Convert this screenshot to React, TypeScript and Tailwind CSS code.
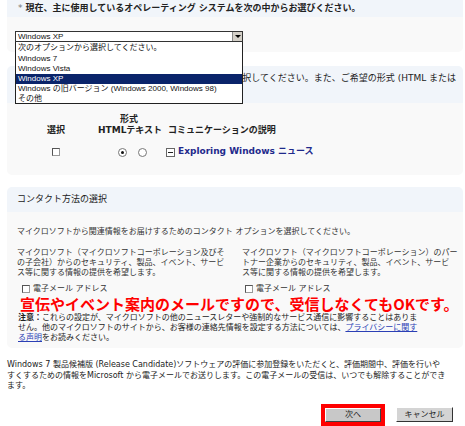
import React from "react";

const options = [
  { label: "次のオプションから選択してください。", h: "h-[12px]" },
  { label: "Windows 7", h: "h-[10px]" },
  { label: "Windows Vista", h: "h-[10px]" },
  { label: "Windows XP", h: "h-[10px]", active: true },
  { label: "Windows の旧バージョン (Windows 2000, Windows 98)", h: "h-[10px]" },
  { label: "その他", h: "h-[9px]" },
];

function Checkbox() {
  return <span className="inline-block w-[8px] h-[8px] border border-t-[#555] border-l-[#555] border-b-[#999] border-r-[#999] bg-white shrink-0" />;
}

function Radio({ on }: { on?: boolean }) {
  return (
    <span className="w-[9px] h-[9px] rounded-full border border-[#777] bg-white flex items-center justify-center">
      {on && <span className="w-[3px] h-[3px] rounded-full bg-[#111]" />}
    </span>
  );
}

export default function App() {
  return (
    <div className="w-[465px] h-[426px] bg-white overflow-hidden text-[8px] text-[#333] font-['DejaVu_Sans','Noto_Sans_CJK_JP',sans-serif]">
      {/* OS selection */}
      <div className="ml-[7px] mr-[2px]">
        <div className="h-[17px] bg-[#f1f5fa] pl-[11px] flex items-center text-[9px] font-bold text-[#222] whitespace-nowrap">
          <span className="text-[#777] font-normal mr-[3px]">*</span>
          現在、主に使用しているオペレーティング システムを次の中からお選びください。
        </div>
        <div className="h-[35px] bg-[#f9f9f9] rounded-b-[5px] pt-[14px] pl-[8px]">
          <div className="relative z-10 w-[228px]">
            <div className="h-[11px] border border-[#333] bg-white flex items-center font-['Liberation_Sans','Noto_Sans_CJK_JP',sans-serif] text-[#111]">
              <span className="pl-[2px] flex-1 leading-none">Windows XP</span>
              <span className="w-[10px] h-[9px] bg-[#d4d0c8] border-l border-[#888] flex items-center justify-center">
                <span className="w-0 h-0 border-l-[3px] border-r-[3px] border-t-[3px] border-l-transparent border-r-transparent border-t-black" />
              </span>
            </div>
            <div className="absolute left-0 top-[11px] w-[228px] border border-[#222] border-t-0 bg-white font-['Liberation_Sans','Noto_Sans_CJK_JP',sans-serif] text-[#111]">
              {options.map((o) => (
                <div
                  key={o.label}
                  className={`${o.h} flex items-center pl-[2px] whitespace-nowrap leading-none ${o.active ? "bg-[#0a246a] text-white" : ""}`}
                >
                  {o.label}
                </div>
              ))}
            </div>
          </div>
        </div>
      </div>

      {/* Newsletter selection */}
      <div className="ml-[7px] mr-[2px] mt-[14px]">
        <div className="bg-[#f1f5fa] rounded-t-[5px] pt-[6px] pb-[7px] pl-[11px] text-[9px] leading-[12px] text-[#222] whitespace-nowrap">
          受け取りたいニュースレターやコミュニケーションを選択してください。また、ご希望の形式 (HTML または
          <br />
          テキスト) を選択してください。
        </div>
        <div className="h-[72px] bg-[#f9f9f9] rounded-b-[5px] pt-[11px] pl-[23px] text-[9px] font-bold text-[#222]">
          <div className="flex leading-[11px]">
            <div className="w-[52px]" />
            <div className="w-[62px] ml-[16px] text-center">形式</div>
          </div>
          <div className="flex leading-[11px]">
            <div className="w-[52px] text-center">選択</div>
            <div className="w-[62px] ml-[16px] text-center whitespace-nowrap">HTMLテキスト</div>
            <div className="ml-[8px] whitespace-nowrap">コミュニケーションの説明</div>
          </div>
          <div className="flex items-center h-[12px] mt-[10px]">
            <div className="w-[52px] flex justify-center">
              <Checkbox />
            </div>
            <div className="w-[62px] ml-[16px] flex gap-[11px] pl-[20px]">
              <Radio on />
              <Radio />
            </div>
            <div className="ml-[6px] flex items-center gap-[3px] whitespace-nowrap">
              <span className="w-[9px] h-[9px] border border-[#666] bg-white flex items-center justify-center">
                <span className="w-[5px] h-[1px] bg-[#222]" />
              </span>
              <span className="text-[#1f2a8c]">Exploring Windows ニュース</span>
            </div>
          </div>
        </div>
      </div>

      {/* Contact */}
      <div className="ml-[7px] mr-[2px] mt-[12px]">
        <div className="h-[25px] bg-[#f1f5fa] rounded-t-[5px] pl-[10px] flex items-center text-[9px] text-[#222]">
          コンタクト方法の選択
        </div>
        <div className="h-[136px] bg-[#f9f9f9] rounded-b-[5px] pt-[15px] pl-[10px] leading-[10px] whitespace-nowrap">
          <div>マイクロソフトから関連情報をお届けするためのコンタクト オプションを選択してください。</div>
          <div className="flex mt-[11px]">
            <div className="w-[225px]">
              <div>マイクロソフト（マイクロソフトコーポレーション及びそ</div>
              <div>の子会社）からのセキュリティ、製品、イベント、サービ</div>
              <div>ス等に関する情報の提供を希望します。</div>
              <div className="flex items-center gap-[3px] pl-[5px] mt-[6px] h-[10px]">
                <Checkbox />
                <span>電子メール アドレス</span>
              </div>
            </div>
            <div>
              <div>マイクロソフト（マイクロソフトコーポレーション）のパー</div>
              <div>トナー企業からのセキュリティ、製品、イベント、サービ</div>
              <div>ス等に関する情報の提供を希望します。</div>
              <div className="flex items-center gap-[3px] pl-[3px] mt-[6px] h-[10px]">
                <Checkbox />
                <span>電子メール アドレス</span>
              </div>
            </div>
          </div>
          <div className="mt-[2px] pl-[3px] text-[15px] leading-[15px] font-bold text-[#ff0000] font-['Noto_Sans_CJK_JP',sans-serif]">
            宣伝やイベント案内のメールですので、受信しなくてもOKです。
          </div>
          <div className="mt-[2px] pl-[1px] text-[#222]">
            <div>
              <span className="font-bold">注意：</span>これらの設定が、マイクロソフトの他のニュースレターや強制的なサービス通信に影響することはありま
            </div>
            <div>
              せん。他のマイクロソフトのサイトから、お客様の連絡先情報を設定する方法については、
              <span className="text-[#2b3fb5] underline">プライバシーに関す</span>
            </div>
            <div>
              <span className="text-[#2b3fb5] underline">る声明</span>をお読みください。
            </div>
          </div>
        </div>
      </div>

      {/* Footer note */}
      <div className="mt-[12px] pl-[7px] leading-[10.5px] text-[#222] whitespace-nowrap">
        <div>Windows 7 製品候補版 (Release Candidate)ソフトウェアの評価に参加登録をいただくと、評価期間中、評価を行いや</div>
        <div>すくするための情報をMicrosoft から電子メールでお送りします。この電子メールの受信は、いつでも解除することができ</div>
        <div>ます。</div>
      </div>

      {/* Buttons */}
      <div className="flex justify-end items-center gap-[11px] pr-[12px] mt-[12px]">
        <div className="w-[64px] h-[22px] border-4 border-[#ff0000] bg-[#ff0000]">
          <div className="w-full h-full bg-[#c8c8c8] border border-t-white border-l-white border-b-[#404040] border-r-[#404040] flex items-center justify-center text-[#222]">
            次へ
          </div>
        </div>
        <div className="w-[57px] h-[15px] bg-[#d4d4d4] border border-t-white border-l-white border-b-[#333] border-r-[#333] flex items-center justify-center text-[#222]">
          キャンセル
        </div>
      </div>
    </div>
  );
}
